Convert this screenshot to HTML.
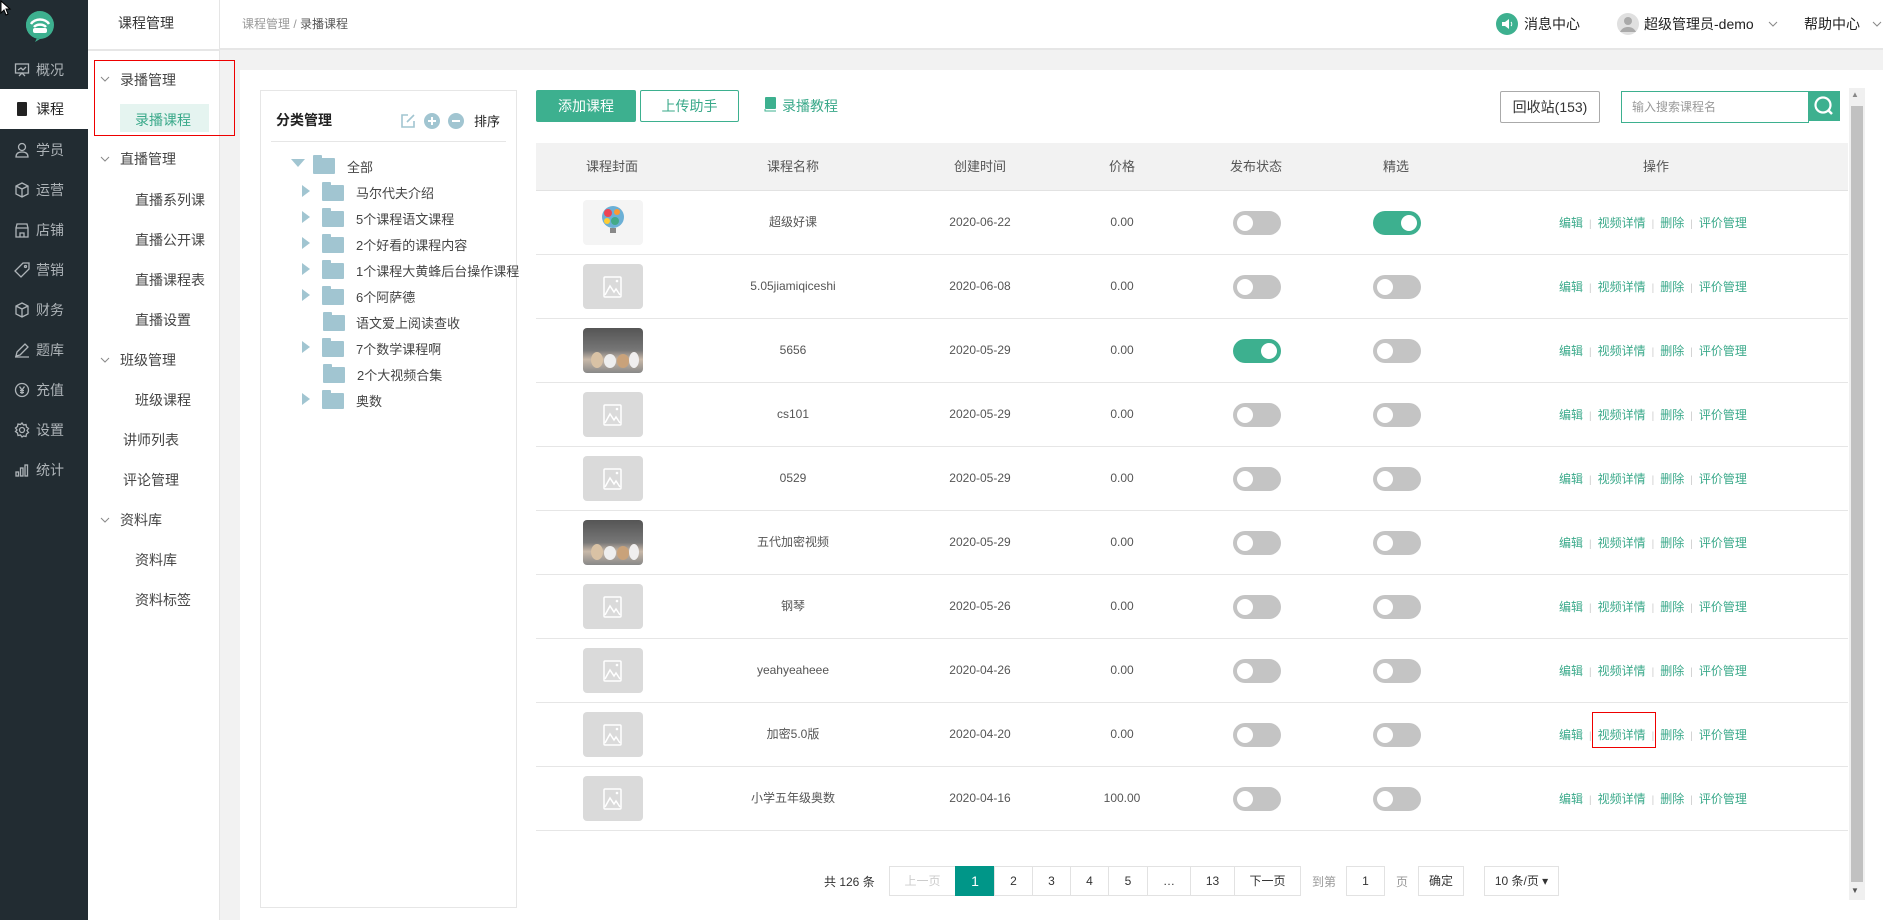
<!DOCTYPE html>
<html><head><meta charset="utf-8">
<style>
*{margin:0;padding:0;box-sizing:border-box}
body{width:1883px;height:920px;overflow:hidden;background:#f2f2f2;font-family:"Liberation Sans","Noto Sans CJK SC",sans-serif;font-size:14px;color:#333;position:relative}
.a{position:absolute}
.side{left:0;top:0;width:88px;height:920px;background:#222c32}
.side .it{position:absolute;left:0;width:88px;height:40px;line-height:40px;color:#aeb4b8;font-size:14px;padding-left:14px}
.side .it svg{position:absolute;left:14px;top:12px}
.side .it span{position:absolute;left:36px}
.side .on{background:#fff;color:#222}
.col2{left:88px;top:0;width:132px;height:920px;background:#fff;border-right:1px solid #e5e5e5}
.m{position:absolute;font-size:14px;color:#444;white-space:nowrap}
.chev{position:absolute}
.hdr{left:220px;top:0;width:1663px;height:50px;background:#fff;border-bottom:2px solid #e6e6e6}
.card{left:240px;top:70px;width:1643px;height:850px;background:#fff}
.tree{left:260px;top:90px;width:257px;height:818px;border:1px solid #e6e6e6;background:#fff}
.tr{position:absolute;font-size:13px;color:#444;white-space:nowrap}
.fold{position:absolute;width:22px;height:16px;background:#a1c5d1;border-radius:1px}
.fold:before{content:"";position:absolute;left:0;top:-3px;width:9px;height:4px;background:#a1c5d1;border-radius:1px 1px 0 0}
.tri{position:absolute;width:0;height:0;border-top:6px solid transparent;border-bottom:6px solid transparent;border-left:8px solid #a1c5d1}
.th{left:536px;top:143px;width:1312px;height:48px;background:#f2f2f2;border-bottom:1px solid #e2e2e2}
.c{position:absolute;text-align:center;transform:translateX(-50%);white-space:nowrap;font-size:13px;color:#555;line-height:16px}
.row{position:absolute;left:536px;width:1312px;height:64px;border-bottom:1px solid #e6e6e6}
.row .c{top:23px;font-size:12px}
.img{position:absolute;left:47px;top:9px;width:60px;height:45px;border-radius:4px;background:#dadada}
.tg{position:absolute;width:48px;height:24px;border-radius:12px;background:#c4c4c4}
.tg:after{content:"";position:absolute;left:4px;top:4px;width:16px;height:16px;border-radius:50%;background:#fff}
.tg.on{background:#3db08f}.tg.on:after{left:28px}
.op{position:absolute;left:1023px;top:0;line-height:64px;font-size:12px;color:#3aa98a;white-space:nowrap}
.op i{font-style:normal;color:#ccc;margin:0 6px;font-size:10px}
.pg{position:absolute;top:866px;height:30px;line-height:28px;border:1px solid #e2e2e2;text-align:center;font-size:12px;color:#333;background:#fff}
</style></head><body>
<div class="a side">
<svg class="a" style="left:22px;top:8px" width="36" height="36" viewBox="0 0 36 36"><path d="M18 3a14 14 0 1 0 0 28h0l-5 3 2-4A14 14 0 0 1 18 3z" fill="#3db08f"/><circle cx="18" cy="17" r="14" fill="#3db08f"/><path d="M9 16a10 8 0 0 1 18 0M12 19a7 5 0 0 1 12 0" stroke="#fff" stroke-width="2.5" fill="none"/><rect x="11" y="20" width="14" height="5" rx="2" fill="#fff"/></svg>
<div class="it" style="top:50px"><svg width="16" height="16" viewBox="0 0 16 16" fill="none" stroke="#aeb4b8" stroke-width="1.3"><rect x="1.5" y="2" width="13" height="9"/><path d="M5 14l3-3 3 3M4 8l3-2 2 2 3-3"/></svg><span>概况</span></div>
<div class="it on" style="top:89px"><svg width="16" height="16" viewBox="0 0 16 16"><rect x="3" y="1" width="10" height="14" rx="1" fill="#222"/></svg><span>课程</span></div>
<div class="it" style="top:130px"><svg width="16" height="16" viewBox="0 0 16 16" fill="none" stroke="#aeb4b8" stroke-width="1.3"><circle cx="8" cy="5" r="3.5"/><path d="M2 15c0-4 3-5 6-5s6 1 6 5z"/></svg><span>学员</span></div>
<div class="it" style="top:170px"><svg width="16" height="16" viewBox="0 0 16 16" fill="none" stroke="#aeb4b8" stroke-width="1.3"><path d="M8 1l6 3v8l-6 3-6-3V4zM2 4l6 3 6-3M8 7v8"/></svg><span>运营</span></div>
<div class="it" style="top:210px"><svg width="16" height="16" viewBox="0 0 16 16" fill="none" stroke="#aeb4b8" stroke-width="1.3"><path d="M2 6h12v9H2zM2 6l1-4h10l1 4M6 15v-4h4v4"/></svg><span>店铺</span></div>
<div class="it" style="top:250px"><svg width="16" height="16" viewBox="0 0 16 16" fill="none" stroke="#aeb4b8" stroke-width="1.3"><path d="M9 1h6v6l-8 8-6-6z"/><circle cx="11.5" cy="4.5" r="1"/></svg><span>营销</span></div>
<div class="it" style="top:290px"><svg width="16" height="16" viewBox="0 0 16 16" fill="none" stroke="#aeb4b8" stroke-width="1.3"><path d="M8 1l6 3v8l-6 3-6-3V4zM2 4l6 3 6-3M8 7v8"/></svg><span>财务</span></div>
<div class="it" style="top:330px"><svg width="16" height="16" viewBox="0 0 16 16" fill="none" stroke="#aeb4b8" stroke-width="1.3"><path d="M2 14l1-4 8-8 3 3-8 8zM1 15h14"/></svg><span>题库</span></div>
<div class="it" style="top:370px"><svg width="16" height="16" viewBox="0 0 16 16" fill="none" stroke="#aeb4b8" stroke-width="1.3"><circle cx="8" cy="8" r="6.5"/><path d="M5.5 4.5L8 8l2.5-3.5M8 8v4M6 8.5h4M6 10.5h4"/></svg><span>充值</span></div>
<div class="it" style="top:410px"><svg width="16" height="16" viewBox="0 0 16 16" fill="none" stroke="#aeb4b8" stroke-width="1.3"><circle cx="8" cy="8" r="2.5"/><path d="M8 1l1.5 2 2.5-.5.5 2.5 2 1.5-1.5 2 1.5 2-2 1.5-.5 2.5-2.5-.5L8 15l-1.5-2-2.5.5-.5-2.5-2-1.5L3 8 1.5 6l2-1.5L4 2l2.5.5z"/></svg><span>设置</span></div>
<div class="it" style="top:450px"><svg width="16" height="16" viewBox="0 0 16 16" fill="none" stroke="#aeb4b8" stroke-width="1.3"><rect x="2" y="10" width="2.5" height="4"/><rect x="6.5" y="6" width="2.5" height="8"/><rect x="11" y="3" width="2.5" height="11"/></svg><span>统计</span></div>
</div>
<svg class="a" style="left:0;top:0" width="12" height="16" viewBox="0 0 12 16"><path d="M1 1v12l3-3 2 5 2-1-2-5h4z" fill="#fff" stroke="#000"/></svg>

<div class="a col2">
<div class="m" style="left:30px;top:13px;font-size:14px;color:#333">课程管理</div>
<div class="a" style="left:0;top:49px;width:132px;height:2px;background:#e6e6e6"></div>
<svg class="chev" style="left:12px;top:76px" width="10" height="6"><path d="M1 1l4 4 4-4" stroke="#888" fill="none"/></svg><div class="m" style="left:32px;top:70px">录播管理</div>
<div class="a" style="left:32px;top:104px;width:89px;height:28px;background:#e5f4f0"></div>
<div class="m" style="left:47px;top:110px;color:#3aa98a">录播课程</div>
<svg class="chev" style="left:12px;top:156px" width="10" height="6"><path d="M1 1l4 4 4-4" stroke="#888" fill="none"/></svg><div class="m" style="left:32px;top:149px">直播管理</div>
<div class="m" style="left:47px;top:190px">直播系列课</div>
<div class="m" style="left:47px;top:230px">直播公开课</div>
<div class="m" style="left:47px;top:270px">直播课程表</div>
<div class="m" style="left:47px;top:310px">直播设置</div>
<svg class="chev" style="left:12px;top:357px" width="10" height="6"><path d="M1 1l4 4 4-4" stroke="#888" fill="none"/></svg><div class="m" style="left:32px;top:350px">班级管理</div>
<div class="m" style="left:47px;top:390px">班级课程</div>
<div class="m" style="left:35px;top:430px">讲师列表</div>
<div class="m" style="left:35px;top:470px">评论管理</div>
<svg class="chev" style="left:12px;top:517px" width="10" height="6"><path d="M1 1l4 4 4-4" stroke="#888" fill="none"/></svg><div class="m" style="left:32px;top:510px">资料库</div>
<div class="m" style="left:47px;top:550px">资料库</div>
<div class="m" style="left:47px;top:590px">资料标签</div>
</div>
<div class="a" style="left:94px;top:60px;width:141px;height:76px;border:1px solid #e00"></div>

<div class="a hdr">
<div class="m" style="left:22px;top:15px;font-size:12px;color:#999">课程管理 <span style="color:#999">/</span> <span style="color:#555">录播课程</span></div>
<svg class="a" style="left:1276px;top:13px" width="22" height="22" viewBox="0 0 22 22"><circle cx="11" cy="11" r="11" fill="#3db08f"/><path d="M6 9h3l4-3v10l-4-3H6z" fill="#fff"/><path d="M15 9a3 3 0 0 1 0 4" stroke="#fff" fill="none"/></svg>
<div class="m" style="left:1304px;top:14px;color:#222">消息中心</div>
<svg class="a" style="left:1397px;top:13px" width="22" height="22" viewBox="0 0 22 22"><circle cx="11" cy="11" r="11" fill="#e0e0e0"/><circle cx="11" cy="8" r="4" fill="#aaa"/><path d="M3 19c2-4 5-5 8-5s6 1 8 5" fill="#aaa"/></svg>
<div class="m" style="left:1424px;top:14px;color:#222">超级管理员-demo</div>
<svg class="chev" style="left:1548px;top:21px" width="10" height="6"><path d="M1 1l4 4 4-4" stroke="#888" fill="none"/></svg>
<div class="m" style="left:1584px;top:14px;color:#222">帮助中心</div>
<svg class="chev" style="left:1652px;top:21px" width="10" height="6"><path d="M1 1l4 4 4-4" stroke="#888" fill="none"/></svg>
</div>

<div class="a card"></div>
<div class="a tree">
<div class="m" style="left:15px;top:19px;font-weight:bold;font-size:14px;color:#222">分类管理</div>
<svg class="a" style="left:139px;top:22px" width="16" height="16" viewBox="0 0 16 16" fill="none" stroke="#a1c5d1" stroke-width="1.6"><path d="M14 8v6H2V2h6"/><path d="M7 9l7-7"/></svg>
<svg class="a" style="left:163px;top:22px" width="16" height="16"><circle cx="8" cy="8" r="8" fill="#a1c5d1"/><path d="M4 8h8M8 4v8" stroke="#fff" stroke-width="2"/></svg>
<svg class="a" style="left:187px;top:22px" width="16" height="16"><circle cx="8" cy="8" r="8" fill="#a1c5d1"/><path d="M4 8h8" stroke="#fff" stroke-width="2"/></svg>
<div class="m" style="left:213px;top:20px;font-size:13px;color:#222">排序</div>
<div class="a" style="left:10px;top:50px;width:235px;height:1px;background:#e6e6e6"></div>
<div class="a" style="left:30px;top:68px;width:0;height:0;border-left:7px solid transparent;border-right:7px solid transparent;border-top:8px solid #a1c5d1"></div>
<div class="fold" style="left:52px;top:67px"></div><div class="tr" style="left:86px;top:66px">全部</div>
<div class="tri" style="left:41px;top:94px"></div><div class="fold" style="left:61px;top:94px"></div><div class="tr" style="left:95px;top:92px">马尔代夫介绍</div>
<div class="tri" style="left:41px;top:120px"></div><div class="fold" style="left:61px;top:120px"></div><div class="tr" style="left:95px;top:118px">5个课程语文课程</div>
<div class="tri" style="left:41px;top:146px"></div><div class="fold" style="left:61px;top:146px"></div><div class="tr" style="left:95px;top:144px">2个好看的课程内容</div>
<div class="tri" style="left:41px;top:172px"></div><div class="fold" style="left:61px;top:172px"></div><div class="tr" style="left:95px;top:170px">1个课程大黄蜂后台操作课程</div>
<div class="tri" style="left:41px;top:198px"></div><div class="fold" style="left:61px;top:198px"></div><div class="tr" style="left:95px;top:196px">6个阿萨德</div>
<div class="fold" style="left:62px;top:224px"></div><div class="tr" style="left:95px;top:222px">语文爱上阅读查收</div>
<div class="tri" style="left:41px;top:250px"></div><div class="fold" style="left:61px;top:250px"></div><div class="tr" style="left:95px;top:248px">7个数学课程啊</div>
<div class="fold" style="left:62px;top:276px"></div><div class="tr" style="left:96px;top:274px">2个大视频合集</div>
<div class="tri" style="left:41px;top:302px"></div><div class="fold" style="left:61px;top:302px"></div><div class="tr" style="left:95px;top:300px">奥数</div>
</div>

<div class="a" style="left:536px;top:90px;width:100px;height:32px;background:#3db08f;border-radius:2px;color:#fff;text-align:center;line-height:32px;font-size:14px">添加课程</div>
<div class="a" style="left:640px;top:90px;width:99px;height:32px;border:1px solid #3db08f;border-radius:2px;color:#3aa98a;text-align:center;line-height:30px;font-size:14px">上传助手</div>
<svg class="a" style="left:764px;top:97px" width="13" height="15" viewBox="0 0 13 15"><rect x="1" y="0" width="11" height="12" rx="1" fill="#3db08f"/><path d="M1 12v2h11" stroke="#3db08f" fill="none"/></svg>
<div class="m" style="left:782px;top:96px;color:#3aa98a">录播教程</div>
<div class="a" style="left:1500px;top:91px;width:100px;height:32px;border:1px solid #aaa;border-radius:2px;text-align:center;line-height:30px;font-size:14px;color:#333">回收站(153)</div>
<div class="a" style="left:1621px;top:91px;width:188px;height:32px;border:1px solid #3db08f;padding-left:10px;line-height:30px;font-size:12px;color:#999">输入搜索课程名</div>
<div class="a" style="left:1808px;top:91px;width:32px;height:30px;background:#3db08f"><svg width="32" height="30"><circle cx="15" cy="14" r="7.5" stroke="#fff" stroke-width="2.2" fill="none"/><path d="M20 19l4 4" stroke="#fff" stroke-width="2.5"/></svg></div>

<div class="a th">
<div class="c" style="left:76px;top:16px">课程封面</div>
<div class="c" style="left:257px;top:16px">课程名称</div>
<div class="c" style="left:444px;top:16px">创建时间</div>
<div class="c" style="left:586px;top:16px">价格</div>
<div class="c" style="left:720px;top:16px">发布状态</div>
<div class="c" style="left:860px;top:16px">精选</div>
<div class="c" style="left:1120px;top:16px">操作</div>
</div>

<div id="rows"></div>
<script>
var d=[["超级好课","2020-06-22","0.00",0,1,"bulb"],["5.05jiamiqiceshi","2020-06-08","0.00",0,0,""],["5656","2020-05-29","0.00",1,0,"dog"],["cs101","2020-05-29","0.00",0,0,""],["0529","2020-05-29","0.00",0,0,""],["五代加密视频","2020-05-29","0.00",0,0,"dog"],["钢琴","2020-05-26","0.00",0,0,""],["yeahyeaheee","2020-04-26","0.00",0,0,""],["加密5.0版","2020-04-20","0.00",0,0,""],["小学五年级奥数","2020-04-16","100.00",0,0,""]];
var h="";
d.forEach(function(r,i){var t=191+i*64;var im;
if(r[5]=="bulb")im='<div class="img" style="background:#f4f4f4"><svg width="60" height="45"><circle cx="30" cy="17" r="11" fill="#6bb0d6"/><circle cx="25" cy="13" r="4" fill="#e45"/><circle cx="34" cy="12" r="3" fill="#f93"/><circle cx="32" cy="21" r="4" fill="#4a8"/><circle cx="24" cy="21" r="3" fill="#fc3"/><rect x="27" y="28" width="6" height="5" fill="#888"/></svg></div>';
else if(r[5]=="dog")im='<div class="img" style="background:linear-gradient(#555,#777 50%,#c8b8a8 70%,#888)"><svg width="60" height="45"><ellipse cx="14" cy="32" rx="6" ry="8" fill="#d9c2a5"/><ellipse cx="27" cy="33" rx="6" ry="7" fill="#eee"/><ellipse cx="40" cy="33" rx="6" ry="7" fill="#c9a27a"/><ellipse cx="51" cy="32" rx="5" ry="8" fill="#f0eeee"/></svg></div>';
else im='<div class="img"><svg width="60" height="45"><rect x="21" y="13" width="17" height="20" rx="1" fill="none" stroke="#fff" stroke-width="1.5"/><path d="M22 31l5-9 4 6 2-3 4 6" stroke="#fff" fill="none" stroke-width="1.5"/><circle cx="34" cy="17" r="1.3" fill="#fff"/></svg></div>';
h+='<div class="row" style="top:'+t+'px">'+im+'<div class="c" style="left:257px">'+r[0]+'</div><div class="c" style="left:444px">'+r[1]+'</div><div class="c" style="left:586px">'+r[2]+'</div><div class="tg'+(r[3]?' on':'')+'" style="left:697px;top:20px"></div><div class="tg'+(r[4]?' on':'')+'" style="left:837px;top:20px"></div><div class="op">编辑<i>|</i>视频详情<i>|</i>删除<i>|</i>评价管理</div></div>';});
document.getElementById("rows").innerHTML=h;
</script>
<div class="a" style="left:1592px;top:712px;width:64px;height:36px;border:1px solid #e00"></div>
<div class="a" style="left:1849px;top:88px;width:16px;height:812px;background:#f0f0f0"></div>
<div class="a" style="left:1851px;top:106px;width:12px;height:776px;background:#c1c1c1"></div>
<div class="m" style="left:1851px;top:90px;font-size:8px;color:#888">▲</div>
<div class="m" style="left:1851px;top:886px;font-size:8px;color:#555">▼</div>

<div class="m" style="left:824px;top:873px;font-size:12px;color:#333">共 126 条</div>
<div class="pg" style="left:889px;width:67px;color:#ccc">上一页</div>
<div class="pg" style="left:955px;width:40px;background:#009688;color:#fff;border-color:#009688;font-size:14px">1</div>
<div class="pg" style="left:994px;width:39px">2</div>
<div class="pg" style="left:1032px;width:39px">3</div>
<div class="pg" style="left:1070px;width:39px">4</div>
<div class="pg" style="left:1108px;width:40px">5</div>
<div class="pg" style="left:1147px;width:44px">…</div>
<div class="pg" style="left:1190px;width:45px">13</div>
<div class="pg" style="left:1234px;width:67px">下一页</div>
<div class="m" style="left:1312px;top:873px;font-size:12px;color:#999">到第</div>
<div class="pg" style="left:1346px;width:39px">1</div>
<div class="m" style="left:1396px;top:873px;font-size:12px;color:#999">页</div>
<div class="pg" style="left:1418px;width:46px">确定</div>
<div class="pg" style="left:1484px;width:75px">10 条/页 ▾</div>
</body></html>
